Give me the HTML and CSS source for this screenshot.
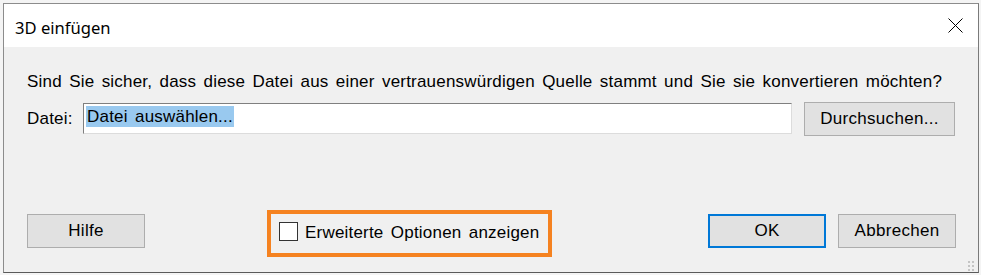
FILE: index.html
```
<!DOCTYPE html>
<html lang="de">
<head>
<meta charset="utf-8">
<title>3D einfügen</title>
<link rel="stylesheet" href="styles.css">
</head>
<body>
<div class="window">
  <div class="titlebar">
    <span class="title">3D einfügen</span>
    <svg class="close" width="15" height="15" viewBox="0 0 15 15" aria-hidden="true">
      <path d="M0.5 0.5 L14.5 14.5 M14.5 0.5 L0.5 14.5" stroke="#000" stroke-width="1" fill="none"/>
    </svg>
  </div>
  <div class="content">
    <p class="message">Sind Sie sicher, dass diese Datei aus einer vertrauenswürdigen Quelle stammt und Sie sie konvertieren möchten?</p>
    <div class="file-row">
      <span class="label">Datei:</span>
      <div class="input"><span class="selected">Datei auswählen...</span></div>
      <button class="btn browse">Durchsuchen...</button>
    </div>
    <div class="bottom-row">
      <button class="btn">Hilfe</button>
      <div class="highlight">
        <span class="checkbox"></span>
        <span class="check-label">Erweiterte Optionen anzeigen</span>
      </div>
      <div class="actions">
        <button class="btn default">OK</button>
        <button class="btn">Abbrechen</button>
      </div>
    </div>
    <svg class="grip" width="8" height="11" viewBox="0 0 8 11" aria-hidden="true">
      <rect x="0" y="1" width="2" height="2" fill="#c4c4c4"/>
      <rect x="4" y="1" width="2" height="2" fill="#c4c4c4"/>
      <rect x="0" y="5" width="2" height="2" fill="#c4c4c4"/>
      <rect x="4" y="5" width="2" height="2" fill="#c4c4c4"/>
      <rect x="0" y="9" width="2" height="2" fill="#c4c4c4"/>
      <rect x="4" y="9" width="2" height="2" fill="#c4c4c4"/>
    </svg>
  </div>
</div>
</body>
</html>
```
FILE: styles.css
```
html, body {
  margin: 0;
  padding: 0;
  background: #f4f4f4;
}
body {
  width: 981px;
  height: 275px;
  overflow: hidden;
  font-family: "Liberation Sans", Arial, sans-serif;
  font-size: 17px;
  letter-spacing: 0.2px;
  word-spacing: 2.4px;
  color: #000;
}
.window {
  margin: 3px 0 0 3px;
  width: 974px;
  height: 268px;
  border: 1px solid #8c8c8c;
  border-bottom-color: #5a5a5a;
  border-right-color: #7a7a7a;
  display: flex;
  flex-direction: column;
  background: #f0f0f0;
}
.titlebar {
  height: 43px;
  background: #fff;
  display: flex;
  align-items: center;
  justify-content: space-between;
  padding: 0 15px 0 11px;
  flex: none;
}
.title {
  font-family: "Noto Sans", "Open Sans", sans-serif;
  font-size: 16.6px;
  letter-spacing: 0;
  word-spacing: 0;
  margin-top: 3px;
}
.close {
  display: block;
  margin-top: -1px;
}
.content {
  position: relative;
  flex: 1;
  padding: 26px 22px 0 23px;
}
.message {
  margin: 0;
  line-height: 18px;
  white-space: nowrap;
}
.file-row {
  display: flex;
  align-items: center;
  margin-top: 11px;
  height: 34px;
}
.label {
  width: 56px;
  flex: none;
}
.input {
  box-sizing: border-box;
  width: 709px;
  height: 31px;
  margin-top: -1px;
  background: #fff;
  border: 1px solid #dcdcdc;
  border-top-color: #7f7f7f;
  border-left-color: #7f7f7f;
  padding: 2px 0 0 2px;
  display: flex;
  align-items: flex-start;
}
.selected {
  background: #99c9ef;
  line-height: 21px;
  padding: 0 1px;
}
.btn {
  box-sizing: border-box;
  width: 118px;
  height: 34px;
  background: #e1e1e1;
  border: 1px solid #adadad;
  font-family: "Liberation Sans", Arial, sans-serif;
  font-size: 17px;
  letter-spacing: 0.3px;
  word-spacing: 2.4px;
  color: #000;
  padding: 0;
  margin: 0;
}
.browse {
  width: 151px;
  margin-left: 12px;
}
.default {
  border: 2px solid #0078d7;
}
.bottom-row {
  display: flex;
  align-items: flex-start;
  margin-top: 74px;
}
.bottom-row > .btn {
  margin-top: 4px;
}
.highlight {
  box-sizing: border-box;
  width: 285px;
  height: 47px;
  margin-left: 122px;
  border: 4px solid #f58220;
  display: flex;
  align-items: center;
  padding: 0 0 0 8px;
  gap: 7px;
}
.checkbox {
  box-sizing: border-box;
  width: 19px;
  height: 19px;
  background: #fff;
  border: 1px solid #333;
  margin-top: -4px;
  flex: none;
}
.check-label {
  margin-top: -2px;
}
.actions {
  margin-left: auto;
  margin-top: 4px;
  display: flex;
  gap: 12px;
}
.grip {
  position: absolute;
  right: 2px;
  bottom: 1px;
  display: block;
}
```
